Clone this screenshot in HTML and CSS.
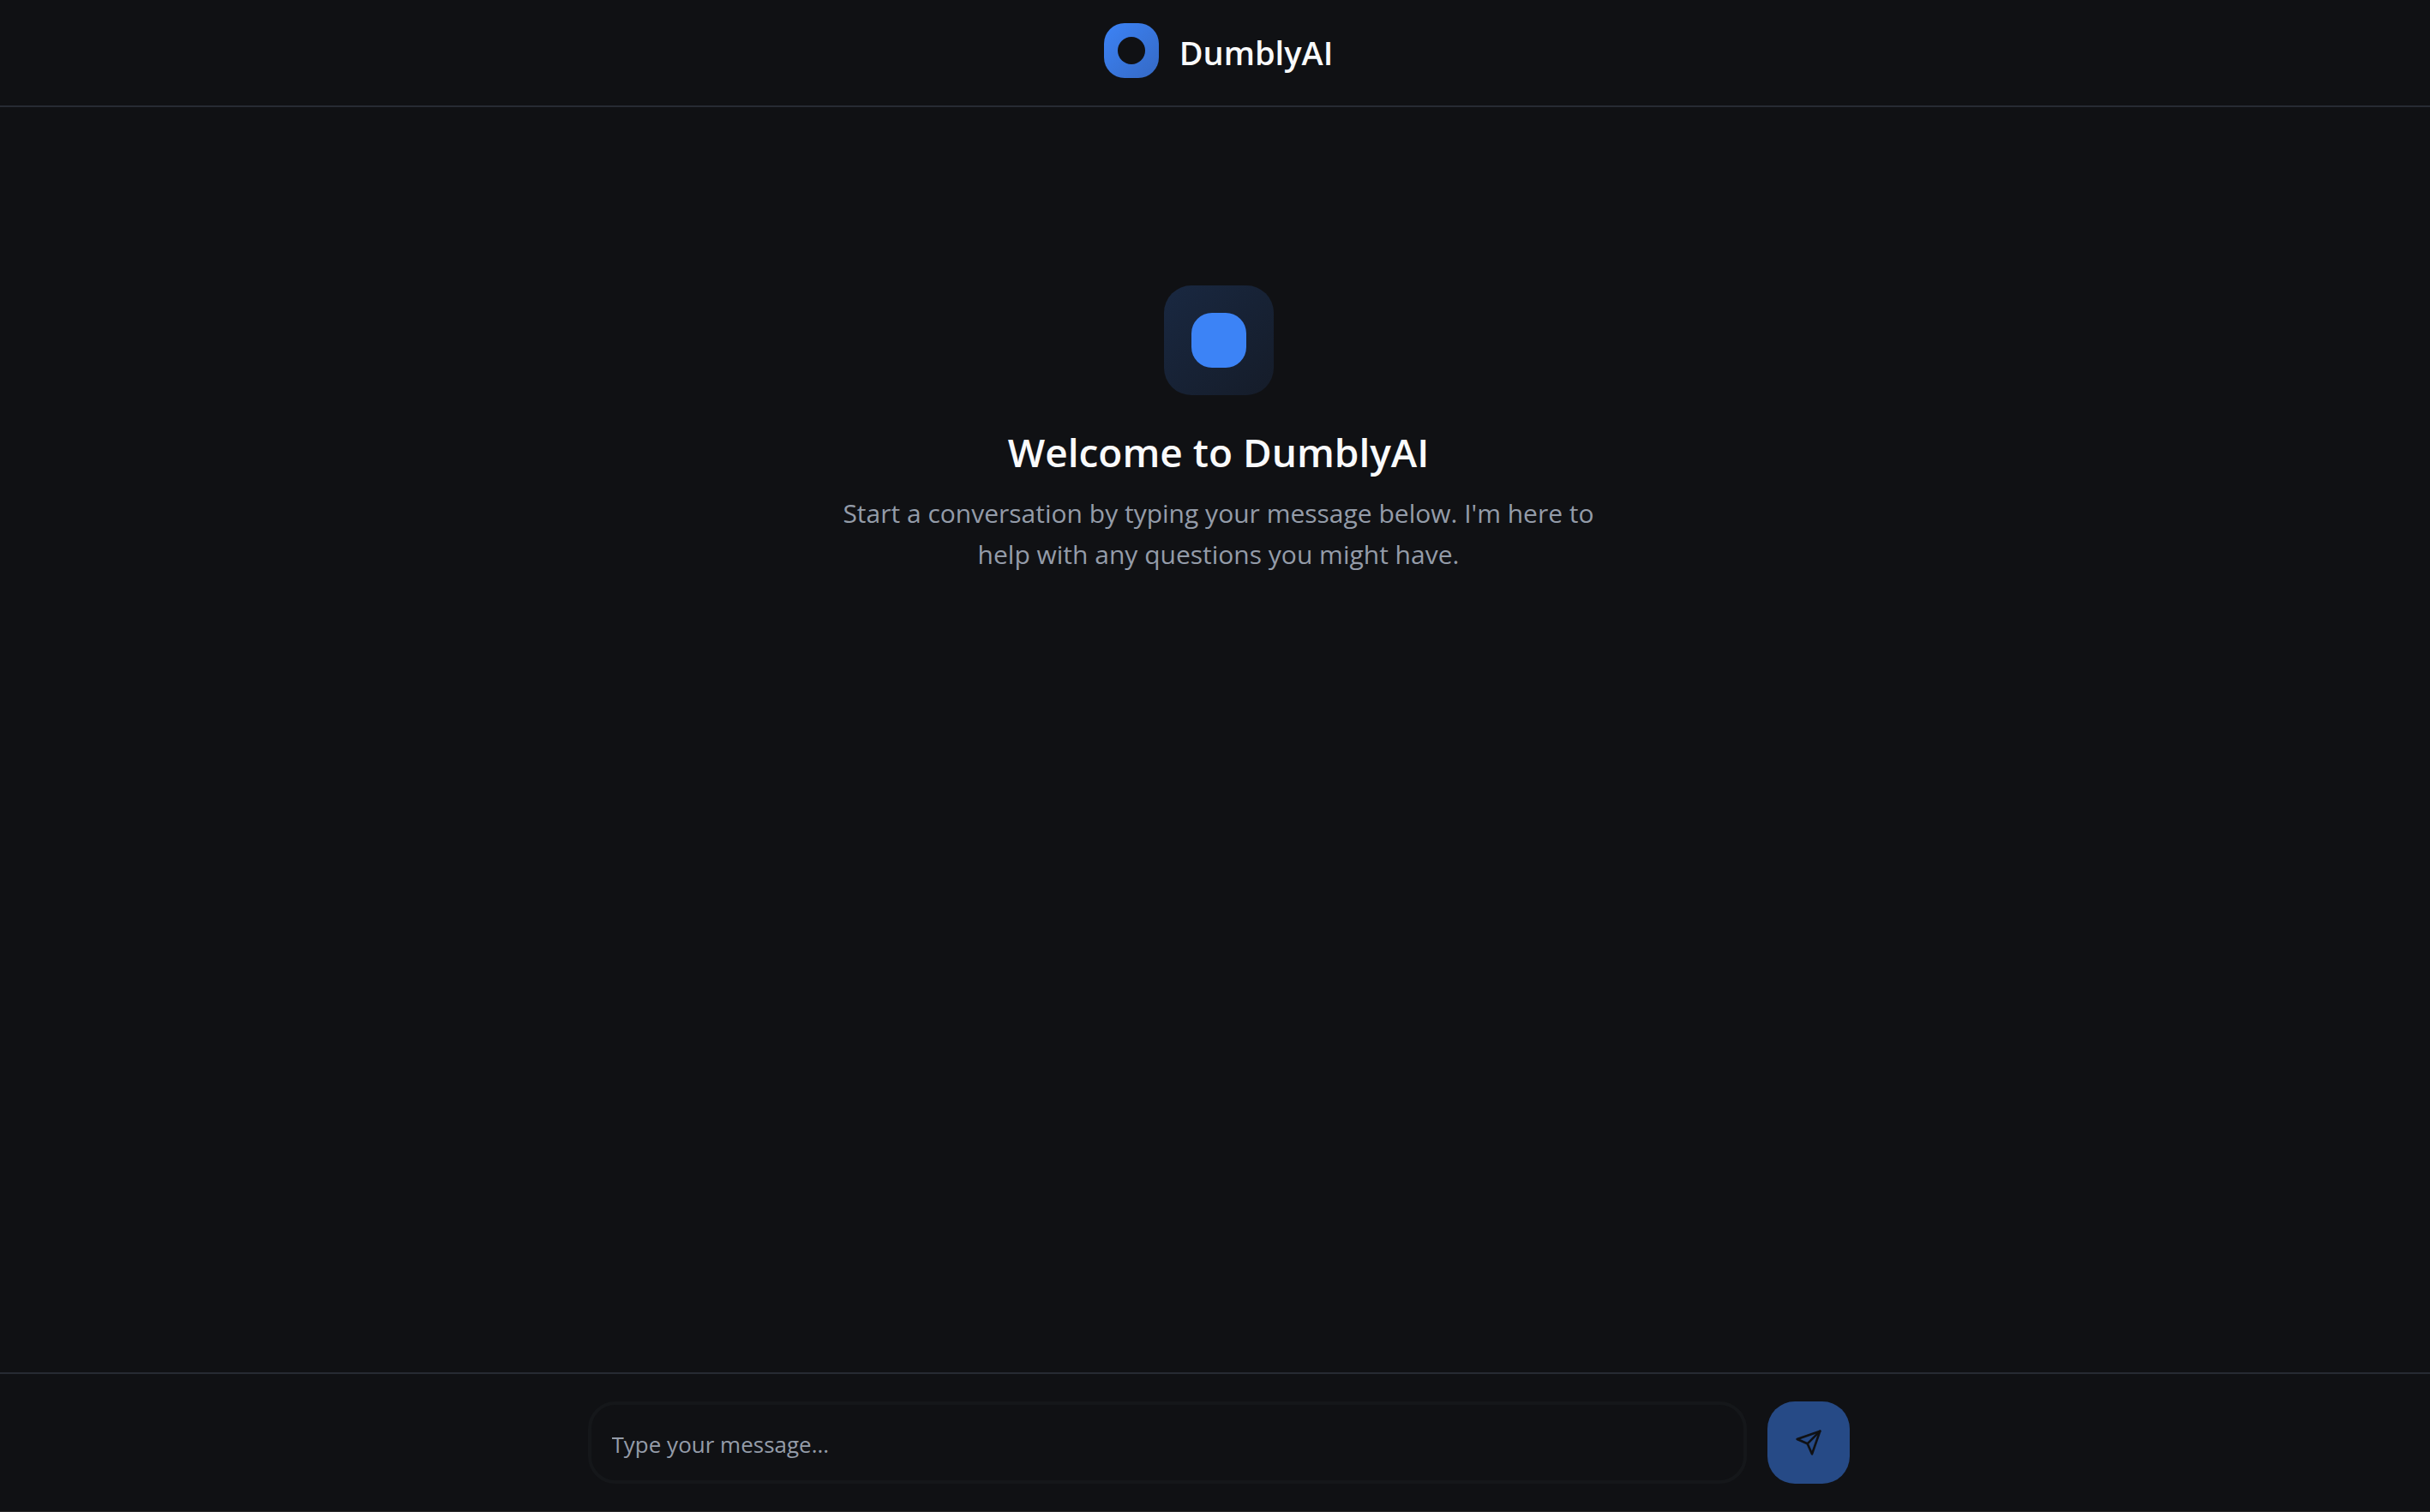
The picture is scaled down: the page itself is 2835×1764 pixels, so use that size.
FILE: index.html
```html
<!DOCTYPE html>
<html lang="en">
<head>
<meta charset="utf-8">
<meta name="viewport" content="width=device-width, initial-scale=1">
<title>DumblyAI</title>
<link rel="stylesheet" href="styles.css">
</head>
<body>
<div class="app">
  <header class="header">
    <div class="logo"><span class="logo-hole"></span></div>
    <h1 class="brand">DumblyAI</h1>
  </header>
  <main class="chat">
    <div class="hero-icon"><span class="hero-mark"></span></div>
    <h2 class="hero-title">Welcome to DumblyAI</h2>
    <p class="hero-text">Start a conversation by typing your message below. I'm here to help with any questions you might have.</p>
  </main>
  <footer class="footer">
    <form class="composer">
      <input class="message" type="text" placeholder="Type your message..." aria-label="Message">
      <button class="send" type="button" aria-label="Send message">
        <svg class="send-icon" viewBox="0 0 24 24" fill="none" stroke="currentColor" stroke-width="2" stroke-linecap="round" stroke-linejoin="round" aria-hidden="true">
          <path d="M22 2 11 13"/>
          <path d="m22 2-7 20-4-9-9-4Z"/>
        </svg>
      </button>
    </form>
  </footer>
</div>
</body>
</html>
```

FILE: styles.css
```css
* {
  box-sizing: border-box;
  margin: 0;
}

body {
  background: #101114;
  color: #f9fafb;
  font-family: "Segoe UI", "Open Sans", "Noto Sans", sans-serif;
}

.app {
  display: flex;
  flex-direction: column;
  min-height: 100vh;
  border-bottom: 1px solid #2b2a2c;
}

.header {
  display: flex;
  justify-content: center;
  gap: 24px;
  padding: 27px 0 28px 8px;
  border-bottom: 2px solid #272b33;
}

.logo {
  display: grid;
  place-items: center;
  width: 64px;
  height: 64px;
  border-radius: 24px;
  background: linear-gradient(135deg, #3c83f6, #3569c4);
}

.logo-hole {
  width: 32px;
  height: 32px;
  border-radius: 50%;
  background: #101114;
}

.brand {
  font-size: 38px;
  font-weight: 600;
  line-height: 68px;
}

.chat {
  flex: 1;
  display: flex;
  flex-direction: column;
  align-items: center;
  padding: 208px 0 48px 8px;
  text-align: center;
}

.hero-icon {
  display: grid;
  place-items: center;
  width: 128px;
  height: 128px;
  margin-bottom: 34px;
  border-radius: 32px;
  background: linear-gradient(135deg, #192841, #151c29);
}

.hero-mark {
  width: 64px;
  height: 64px;
  border-radius: 24px;
  background: #3c83f6;
}

.hero-title {
  margin-bottom: 16px;
  font-size: 46px;
  font-weight: 600;
  line-height: 64px;
}

.hero-text {
  max-width: 896px;
  color: #949ca9;
  font-size: 30px;
  line-height: 48px;
}

.footer {
  padding: 32px 0 32px 8px;
  border-top: 2px solid #272b33;
}

.composer {
  display: flex;
  gap: 24px;
  max-width: 1472px;
  margin: 0 auto;
}

.message {
  flex: 1;
  min-width: 0;
  height: 96px;
  padding: 4px 24px 0;
  border: 4px solid #15171a;
  border-radius: 32px;
  background: transparent;
  color: #f9fafb;
  font: inherit;
  font-size: 26px;
}

.message::placeholder {
  color: #949ca9;
  opacity: 1;
}

.send {
  display: grid;
  place-items: center;
  width: 96px;
  height: 96px;
  padding: 0;
  border: 0;
  border-radius: 32px;
  background: #264a86;
  color: #101114;
}

.send-icon {
  width: 32px;
  height: 32px;
}
```
